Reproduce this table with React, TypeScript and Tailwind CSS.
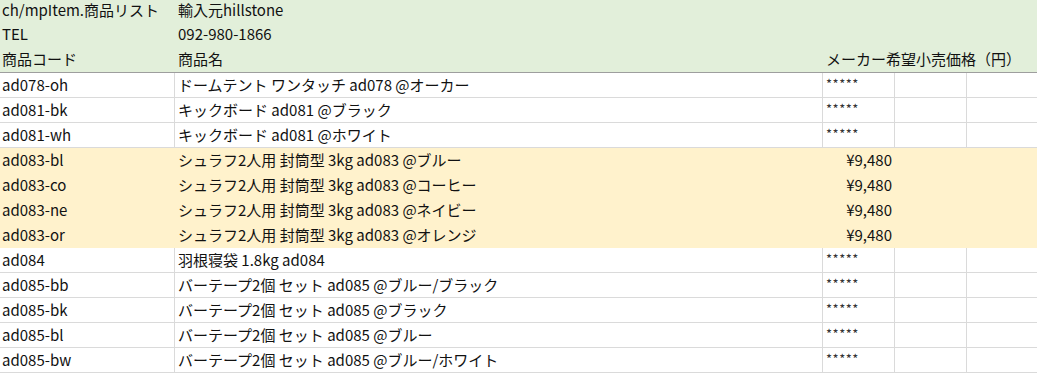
const rows = [
  { code: "ad078-oh", name: "ドームテント ワンタッチ ad078 @オーカー", price: null },
  { code: "ad081-bk", name: "キックボード ad081 @ブラック", price: null },
  { code: "ad081-wh", name: "キックボード ad081 @ホワイト", price: null },
  { code: "ad083-bl", name: "シュラフ2人用 封筒型 3kg ad083 @ブルー", price: "¥9,480" },
  { code: "ad083-co", name: "シュラフ2人用 封筒型 3kg ad083 @コーヒー", price: "¥9,480" },
  { code: "ad083-ne", name: "シュラフ2人用 封筒型 3kg ad083 @ネイビー", price: "¥9,480" },
  { code: "ad083-or", name: "シュラフ2人用 封筒型 3kg ad083 @オレンジ", price: "¥9,480" },
  { code: "ad084", name: "羽根寝袋 1.8kg ad084", price: null },
  { code: "ad085-bb", name: "バーテープ2個 セット ad085 @ブルー/ブラック", price: null },
  { code: "ad085-bk", name: "バーテープ2個 セット ad085 @ブラック", price: null },
  { code: "ad085-bl", name: "バーテープ2個 セット ad085 @ブルー", price: null },
  { code: "ad085-bw", name: "バーテープ2個 セット ad085 @ブルー/ホワイト", price: null },
];

const cols = "grid grid-cols-[175px_648px_72px_72px_1fr]";

function HeaderRow({ a, b, c, last }: { a: string; b: string; c?: string; last?: boolean }) {
  return (
    <div
      className={`${cols} bg-[#e2efda] ${
        last ? "h-[25px] border-b border-[#9e9e9e] pb-[3px]" : "h-[24px] pb-[5px]"
      }`}
    >
      <div className="flex items-center whitespace-nowrap pl-[2px]">{a}</div>
      <div className="flex items-center whitespace-nowrap pl-[3px]">{b}</div>
      <div className="col-span-3 flex items-center whitespace-nowrap pl-[3px]">{c}</div>
    </div>
  );
}

export default function App() {
  return (
    <div
      className="w-[1037px] h-[373px] overflow-hidden bg-white text-[15px] leading-none text-[#111]"
      style={{ fontFamily: '"Noto Sans CJK JP", "Noto Sans", sans-serif' }}
    >
      <HeaderRow a="ch/mpItem.商品リスト" b="輸入元hillstone" />
      <HeaderRow a="TEL" b="092-980-1866" />
      <HeaderRow a="商品コード" b="商品名" c="メーカー希望小売価格（円）" last />

      {rows.map((r) => {
        const hl = r.price !== null;
        const line = hl ? "border-[#fff2cc]" : "border-[#dadada]";
        return (
          <div key={r.code} className={`${cols} h-[25px] ${hl ? "bg-[#fff2cc]" : ""}`}>
            <div className={`flex items-center border-b border-r pb-[2px] pl-[2px] ${line}`}>{r.code}</div>
            <div className={`flex items-center whitespace-nowrap border-b border-r pb-[2px] pl-[3px] ${line}`}>
              {r.name}
            </div>
            <div className={`flex border-b border-r ${line} ${hl ? "items-center justify-end pb-[2px] pr-[2px]" : "items-start pl-[3px] pt-[4px]"}`}>
              {hl ? (
                r.price
              ) : (
                <span className="text-[13px] tracking-[0.5px] text-[#333]">*****</span>
              )}
            </div>
            <div className={`border-b border-r ${line}`} />
            <div className={`border-b ${line}`} />
          </div>
        );
      })}
    </div>
  );
}
